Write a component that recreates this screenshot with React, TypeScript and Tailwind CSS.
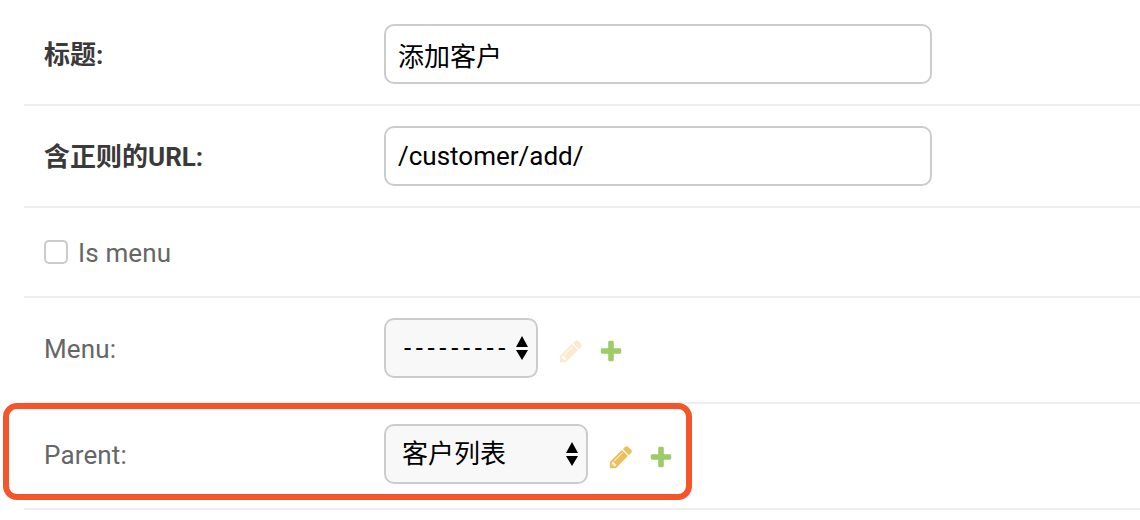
import React from "react"

const font = "font-['Roboto','Noto_Sans_CJK_SC',sans-serif]"

function PencilIcon({ faded }: { faded?: boolean }) {
  return (
    <svg viewBox="0 0 1792 1792" className={`w-[26px] h-[26px] ${faded ? "opacity-30" : ""}`}>
      <path fill="#ecbf5c" d="M491 1536l91-91-235-235-91 91v107h128v128h107zm523-928q0-22-22-22-10 0-17 7l-542 542q-7 7-7 17 0 22 22 22 10 0 17-7l542-542q7-7 7-17zm-54-192l416 416-832 832h-416v-416zm683 96q0 53-37 90l-166 166-416-416 166-165q36-38 90-38 53 0 91 38l235 234q37 39 37 91z" />
    </svg>
  )
}

function PlusIcon() {
  return (
    <svg viewBox="0 0 1792 1792" className="w-[26px] h-[26px]">
      <path fill="#9ccb68" d="M1600 796v192q0 40-28 68t-68 28h-416v416q0 40-28 68t-68 28h-192q-40 0-68-28t-28-68v-416h-416q-40 0-68-28t-28-68v-192q0-40 28-68t68-28h416v-416q0-40 28-68t68-28h192q40 0 68 28t28 68v416h416q40 0 68 28t28 68z" />
    </svg>
  )
}

function SelectBox({ value, width, dashed }: { value: string; width: string; dashed?: boolean }) {
  return (
    <div className={`relative h-[60px] ${width}`}>
      <select
        defaultValue={value}
        className={`appearance-none w-full h-full border-2 border-[#ccc] rounded-[10px] bg-[#f8f8f8] text-[26px] text-black outline-none ${dashed ? "pl-[18px] tracking-[4.6px]" : "pl-4"}`}
      >
        <option>{value}</option>
      </select>
      <svg viewBox="0 0 12 24" className="absolute right-[10px] top-[18px] w-[12px] h-[24px] pointer-events-none">
        <path d="M6 0L12 11H0Z M0 14H12L6 24Z" fill="#000" />
      </svg>
    </div>
  )
}

function TextRow({ label, value }: { label: string; value: string }) {
  return (
    <div className="flex items-center h-[102px] border-b-2 border-[#eee]">
      <label className="w-[360px] pl-5 pt-[2px] text-[26px] font-bold text-[#3a3a3a]">{label}</label>
      <input
        readOnly
        value={value}
        className="w-[548px] h-[60px] border-2 border-[#ccc] rounded-[10px] bg-white px-3 text-[26px] text-black outline-none"
      />
    </div>
  )
}

function SelectRow({ label, value, width, faded, dashed }: { label: string; value: string; width: string; faded?: boolean; dashed?: boolean }) {
  return (
    <div className="flex items-start h-[106px] pt-5 border-b-2 border-[#eee]">
      <label className="w-[360px] pl-5 pt-[1px] h-[60px] leading-[60px] text-[26px] tracking-[0.15px] text-[#666]">{label}</label>
      <SelectBox value={value} width={width} dashed={dashed} />
      <div className="flex items-center h-[60px] pt-[6px] ml-5 gap-[14px]">
        <PencilIcon faded={faded} />
        <PlusIcon />
      </div>
    </div>
  )
}

export default function App() {
  return (
    <div className={`relative w-[1140px] h-[520px] overflow-hidden bg-white pt-[4px] pl-6 ${font}`}>
      <TextRow label="标题:" value="添加客户" />
      <TextRow label="含正则的URL:" value="/customer/add/" />
      <div className="flex items-center h-[90px] border-b-2 border-[#eee] pl-5 gap-[10px]">
        <input type="checkbox" className="appearance-none w-[24px] h-[24px] border-2 border-[#ccc] rounded-[5px] bg-white" />
        <label className="pt-[2px] text-[26px] tracking-[0.15px] text-[#666]">Is menu</label>
      </div>
      <SelectRow label="Menu:" value="---------" width="w-[154px]" faded dashed />
      <SelectRow label="Parent:" value="客户列表" width="w-[204px]" />
      {/* annotation drawn over the screenshot */}
      <div className="absolute left-[3px] top-[403px] w-[689px] h-[97px] border-[6px] border-[#f4552a] rounded-[14px] pointer-events-none" />
    </div>
  )
}
